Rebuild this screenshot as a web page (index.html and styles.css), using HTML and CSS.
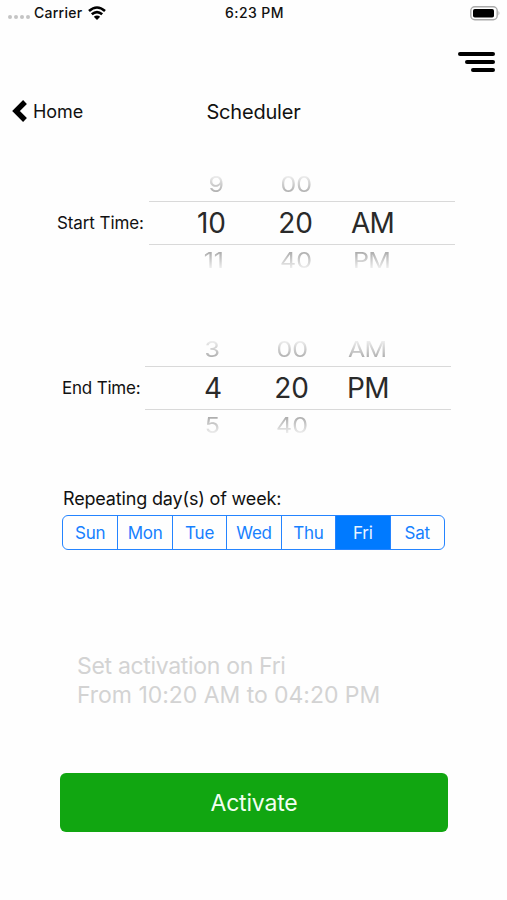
FILE: index.html
```html
<!DOCTYPE html>
<html lang="en">
<head>
<meta charset="utf-8">
<title>Scheduler</title>
<link rel="stylesheet" href="styles.css">
</head>
<body>
<header class="status">
  <div class="carrier">
    <span class="dots"><i></i><i></i><i></i><i></i></span>
    <span class="carrier-name">Carrier</span>
    <svg class="wifi" width="18" height="14" viewBox="0 0 18 14" fill="none" stroke="#000" stroke-width="2.6"><path d="M1 5Q9-2 17 5M3.8 8.3Q9 3.8 14.2 8.3"/><path d="M5.8 10.7Q9 8.2 12.2 10.7L9 13.9Z" fill="#000" stroke="none"/></svg>
  </div>
  <span class="clock">6:23 PM</span>
  <svg class="battery" width="31" height="15" viewBox="0 0 31 15"><rect x=".8" y=".8" width="26.4" height="12.9" rx="4" fill="#fff" stroke="#aaa" stroke-width="1.4"/><rect x="3" y="3" width="21" height="8.6" rx="1.8"/><path d="M28.5 5Q30.4 7.2 28.5 9.4Z" fill="#aaa"/></svg>
</header>
<div class="menu"><i></i><i></i><i></i></div>
<nav class="nav">
  <a class="back"><svg width="15" height="22" viewBox="0 0 15 22" fill="none" stroke="#000" stroke-width="5.4"><path d="M13 2 4 11 13 20"/></svg><span>Home</span></a>
  <h1>Scheduler</h1>
</nav>
<main>
  <section class="time start">
    <label>Start Time:</label>
    <div class="picker">
      <div class="row above"><span>9</span><span>00</span><span></span></div>
      <div class="row chosen"><span>10</span><span>20</span><span>AM</span></div>
      <div class="row below"><span>11</span><span>40</span><span>PM</span></div>
    </div>
  </section>
  <section class="time end">
    <label>End Time:</label>
    <div class="picker">
      <div class="row above"><span>3</span><span>00</span><span>AM</span></div>
      <div class="row chosen"><span>4</span><span>20</span><span>PM</span></div>
      <div class="row below"><span>5</span><span>40</span><span></span></div>
    </div>
  </section>
  <section class="repeat">
    <h2>Repeating day(s) of week:</h2>
    <div class="days"><span>Sun</span><span>Mon</span><span>Tue</span><span>Wed</span><span>Thu</span><span class="on">Fri</span><span>Sat</span></div>
  </section>
  <p class="summary"><span class="line-a">Set activation on Fri</span><br><span class="line-b">From 10:20 AM to 04:20 PM</span></p>
  <button class="activate">Activate</button>
</main>
</body>
</html>
```

FILE: styles.css
```css
* { box-sizing: border-box; }
body { margin: 0; width: 507px; height: 900px; overflow: hidden; background: #fefefe; color: #111; font-family: Inter, "Liberation Sans", sans-serif; }
h1, h2, p { margin: 0; font-weight: 400; }
svg { display: block; flex: none; }

.status { display: grid; grid-template-columns: 1fr auto 1fr; align-items: center; height: 26px; padding: 0 6px 0 8px; font-size: 14px; font-weight: 500; line-height: 17px; }
.carrier { display: flex; align-items: center; }
.dots { display: flex; gap: 2px; width: 26px; padding-top: 8px; }
.dots i { width: 4px; height: 4px; border-radius: 50%; background: #c4c4c4; }
.carrier-name { letter-spacing: .25px; margin-top: -2px; }
.clock { letter-spacing: .4px; margin-top: -2px; }
.wifi { margin-left: 6px; }
.battery { justify-self: end; }

.menu { display: flex; flex-direction: column; align-items: flex-end; gap: 4px; padding: 26px 12px 0 0; }
.menu i { width: 37px; height: 4px; border-radius: 2px; background: #000; }
.menu i:nth-child(2) { width: 30px; }
.menu i:nth-child(3) { width: 24px; }

.nav { display: grid; grid-template-columns: 1fr auto 1fr; align-items: center; height: 30px; margin-top: 24px; padding: 0 12px; }
.back { display: flex; align-items: center; gap: 6px; font-size: 18px; letter-spacing: -.1px; }
h1 { font-size: 20px; letter-spacing: -.2px; padding-top: 1px; }

.time { display: flex; align-items: center; height: 130px; }
.time label { font-size: 17px; letter-spacing: -.1px; }
.start { margin: 32px 0 0 57px; }
.end { margin: 35px 0 0 62px; }
.end label { letter-spacing: -.2px; }
.picker { width: 306px; height: 130px; margin-left: auto; }
.start .picker { margin-right: 52px; }
.end .picker { margin-right: 56px; }
.row { display: grid; grid-template-columns: 77px 87px 1fr; align-items: center; height: 43px; font-size: 28px; line-height: 43px; color: #2a2a2a; }
.row span:nth-child(-n+2) { text-align: right; }
.row span:nth-child(3) { padding-left: 38px; letter-spacing: -.7px; }
.chosen { height: 44px; border: solid #d9d9d9; border-width: 1px 0; }
.above, .below { grid-template-columns: 75px 88px 1fr; font-size: 25px; color: #aaa; }
.row.above span:nth-child(3), .row.below span:nth-child(3) { padding-left: 41px; }
.end .row.above span:nth-child(3) { padding-left: 40px; }
.above { transform: translateY(5px) scaleY(.84); -webkit-mask-image: linear-gradient(transparent 15%, #000 75%); mask-image: linear-gradient(transparent 15%, #000 75%); }
.below { transform: translateY(-6px) scaleY(.84); -webkit-mask-image: linear-gradient(#000 25%, transparent 82%); mask-image: linear-gradient(#000 25%, transparent 82%); }

.repeat { width: 383px; margin: 34px 0 0 62px; }
h2 { height: 28px; font-size: 18px; line-height: 23px; letter-spacing: -.16px; padding-left: 1px; }
.days { display: grid; grid-template-columns: repeat(7, 1fr); height: 35px; overflow: hidden; border: 1px solid #2484ff; border-radius: 6px; color: #1680ff; font-size: 17px; line-height: 34px; letter-spacing: -.2px; text-align: center; }
.days span + span { border-left: 1px solid #2484ff; }
.days .on { background: #007aff; color: #e8f3ff; }

.summary { margin: 102px 0 0 77px; color: #d3d3d3; font-size: 23px; line-height: 29px; white-space: nowrap; }
.line-a { letter-spacing: -.32px; }
.line-b { letter-spacing: -.04px; }
.activate { display: block; width: 388px; height: 59px; margin: 63px 0 0 60px; padding: 0; border: 0; border-radius: 6px; background: #11a611; color: #f2fff2; font: 400 23px Inter, "Liberation Sans", sans-serif; letter-spacing: -.2px; }
```
